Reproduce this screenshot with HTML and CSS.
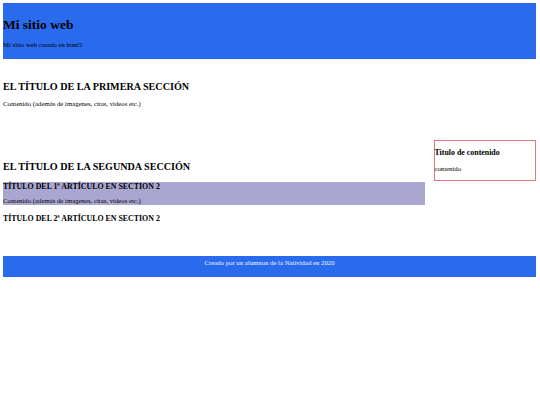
FILE: index.html
```html
<!DOCTYPE html>
<html lang="es">
<head>
<meta charset="utf-8">
<title>Mi sitio web</title>
<link rel="stylesheet" href="styles.css">
</head>
<body>
<header class="site-header">
  <h1 class="site-title">Mi sitio web</h1>
  <p class="site-sub">Mi sitio web creado en html5</p>
</header>
<section class="sec-first">
  <h2 class="sec-title">EL TÍTULO DE LA PRIMERA SECCIÓN</h2>
  <p class="text">Contenido (además de imagenes, citas, videos etc.)</p>
</section>
<div class="row">
  <section class="sec-second">
    <h2 class="sec-title">EL TÍTULO DE LA SEGUNDA SECCIÓN</h2>
    <article class="art-one">
      <h3 class="art-title">TÍTULO DEL 1ª ARTÍCULO EN SECTION 2</h3>
      <p class="text art-text">Contenido (además de imagenes, citas, videos etc.)</p>
    </article>
    <article class="art-two">
      <h3 class="art-title">TÍTULO DEL 2ª ARTÍCULO EN SECTION 2</h3>
    </article>
  </section>
  <aside class="side">
    <h3 class="side-title">Titulo de contenido</h3>
    <p class="text side-text">contenido</p>
  </aside>
</div>
<footer class="site-footer">
  <p class="foot-text">Creado por un alumnon de la Natividad en 2020</p>
</footer>
</body>
</html>
```
FILE: styles.css
```css
html, body { margin: 0; padding: 0; background: #fff; }
body {
  padding: 3px;
  width: 533px;
  font-family: "Liberation Serif", "Times New Roman", serif;
  font-size: 6.75px;
  line-height: 1.15;
  color: #000;
}
h1, h2, h3, p { margin: 0; }

.site-header {
  background: #2a6bee;
  height: 56px;
  box-sizing: border-box;
  padding-top: 13.7px;
}
.site-title { font-size: 13.5px; font-weight: bold; }
.site-sub { margin-top: 8.8px; }

.sec-first { padding-top: 21.8px; height: 81px; box-sizing: border-box; }
.sec-title { font-size: 10.125px; font-weight: bold; }
.sec-first .text { margin-top: 7.6px; }

.row { display: flex; align-items: flex-start; justify-content: space-between; }
.sec-second { width: 422px; padding-top: 20.8px; }
.art-one { background: #a9a7d0; margin-top: 9.3px; height: 23.3px; }
.art-title { font-size: 7.9px; font-weight: bold; }
.art-text { margin-top: 6.1px; }
.art-two { margin-top: 8.9px; }

.side {
  width: 102.5px;
  box-sizing: border-box;
  border: 1px solid #e07a7a;
  padding: 6.8px 0 7.4px 0;
}
.side-title { font-size: 7.9px; font-weight: bold; }
.side-text { margin-top: 7.9px; }

.site-footer {
  margin-top: 33px;
  background: #2a6bee;
  height: 21px;
  box-sizing: border-box;
  padding-top: 2.5px;
  text-align: center;
}
.foot-text { color: #f2f4ff; }
```
